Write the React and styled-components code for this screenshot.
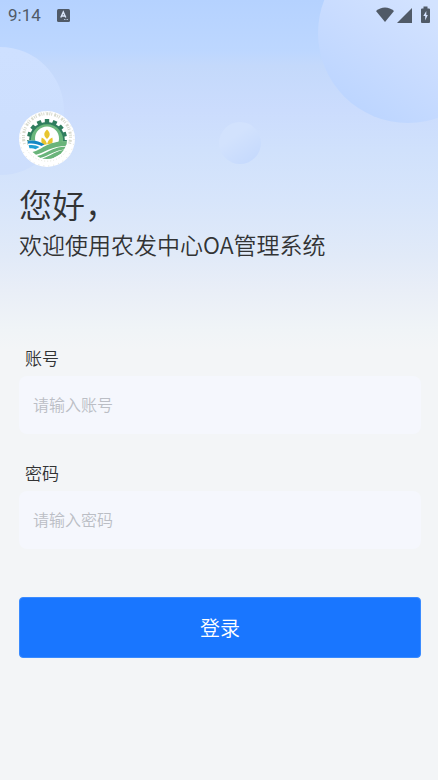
import React, { useState } from "react";
import styled, { createGlobalStyle } from "styled-components";

const GlobalStyle = createGlobalStyle`
  *,
  *::before,
  *::after {
    box-sizing: border-box;
  }

  body {
    margin: 0;
    background-color: #f3f5f7;
    color: #323334;
    font-family: Roboto, "Noto Sans CJK SC", sans-serif;
  }
`;

const Page = styled.div`
  position: relative;
  min-height: 100vh;
  overflow: hidden;
  background: linear-gradient(
      180deg,
      #b5d2ff 0,
      #bdd7ff 52px,
      #c4d9fb 66px,
      #cbdcfd 110px,
      #d0e1fc 150px,
      #d7e5fb 200px,
      #e1eaf8 256px,
      #e9eef7 290px,
      #f0f4f7 330px,
      #f3f5f7 350px
    )
    no-repeat;
`;

const Bubble = styled.span`
  position: absolute;
  width: ${({ $size }) => $size}px;
  height: ${({ $size }) => $size}px;
  border-radius: 50%;
  pointer-events: none;
`;

const LeftBubble = styled(Bubble)`
  top: 47px;
  left: -64px;
  background: linear-gradient(180deg, #cee0ff 0%, #cddffe 60%, #cddefc 100%);
`;

const RightBubble = styled(Bubble)`
  top: -57px;
  right: -60px;
  background: linear-gradient(215deg, #d3e3ff 35%, #c9dcff 60%, #bcd5ff 88%);
`;

const SmallBubble = styled(Bubble)`
  top: 122px;
  left: 50%;
  background: linear-gradient(145deg, #d2e2fd 35%, #c3d8fd 100%);
`;

const StatusBar = styled.header`
  position: relative;
  display: flex;
  align-items: center;
  justify-content: space-between;
  height: 30px;
  padding: 0 8px;
  color: #505a67;

  svg {
    display: block;
  }
`;

const StatusGroup = styled.div`
  display: flex;
  align-items: center;
  gap: ${({ $gap }) => $gap}px;
`;

const Time = styled.time`
  font-size: 17px;
  line-height: 20px;
`;

const Main = styled.main`
  position: relative;
  padding: 81px 17px 40px 19px;
  font-family: "Noto Sans CJK SC", sans-serif;
  font-weight: 350;
`;

const LogoMark = styled.svg`
  display: block;
  width: 56px;
  height: 56px;
`;

const Title = styled.h1`
  margin: 17px 0 4px;
  font-size: 33px;
  font-weight: inherit;
  line-height: 40px;
`;

const Subtitle = styled.p`
  margin: 0;
  font-size: 23px;
  line-height: 32px;
`;

const Form = styled.form`
  display: flex;
  flex-direction: column;
  gap: 27px;
  margin-top: 86px;
`;

const Field = styled.div`
  display: flex;
  flex-direction: column;
  gap: 6px;

  label {
    padding-left: 6px;
    font-size: 17px;
    line-height: 24px;
  }

  input {
    width: 100%;
    height: 58px;
    padding: 0 14px 2px;
    border: 0;
    border-radius: 8px;
    outline: none;
    background-color: #f5f7fd;
    color: inherit;
    font: inherit;
    font-size: 16px;
  }

  input::placeholder {
    color: #bbbec5;
    opacity: 1;
  }
`;

const SubmitButton = styled.button`
  height: 61px;
  margin-top: 21px;
  padding-bottom: 2px;
  border: 1px solid #3a8bff;
  border-radius: 4px;
  background-color: #1976ff;
  color: #fff;
  font: inherit;
  font-size: 20px;
  cursor: pointer;
`;

const teeth = [-100, -75, -50, -25, 0, 25, 50, 75, 100];

const Logo = () => (
  <LogoMark viewBox="0 0 56 56" role="img" aria-label="logo">
    <defs>
      <clipPath id="fields">
        <circle cx="28" cy="28" r="20" />
      </clipPath>
    </defs>
    <circle cx="28" cy="28" r="28" fill="#fff" />
    <circle cx="28" cy="28" r="27" fill="none" stroke="#e3e5dc" strokeWidth="1" strokeDasharray="1 4" />
    <path
      d="M5.500 33A23.500 23.500 0 1 1 50.500 33"
      fill="none"
      stroke="#d8dacd"
      strokeWidth="3"
      strokeDasharray="1 2 2 1 1 1"
    />
    <path d="M8 39A23.500 23.500 0 0 0 48 39" fill="none" stroke="#e2e5da" strokeWidth="1" strokeDasharray="1 2" />
    <g fill="#2f7d5e">
      {teeth.map((angle) => (
        <rect key={angle} x="25.800" y="8" width="4.400" height="5" transform={`rotate(${angle} 28 28)`} />
      ))}
    </g>
    <path d="M10.500 32a17.800 17.800 0 1 1 35 0" fill="#2f7d5e" />
    <path d="M12 32a16.200 16.200 0 1 1 32 0" fill="#6ab67c" />
    <circle cx="28" cy="27.500" r="12" fill="#fff" />
    <g fill="#e8c52e">
      <path d="M28 18.500c3.600 3.200 3.600 6.500 0 9.500-3.600-3-3.600-6.300 0-9.500z" />
      <path d="M28 35c-5.300-.4-6.400-3.500-5.300-8.400 3.800 1.800 5.300 4.500 5.300 8.400z" />
      <path d="M28 35c5.300-.4 6.400-3.500 5.300-8.400-3.800 1.800-5.300 4.500-5.300 8.400z" />
    </g>
    <g clipPath="url(#fields)">
      <path d="M8 30c7-1.500 12 .5 16 4l24-4v20H8z" fill="#fff" />
      <path d="M8.500 30.200c6-1.500 11 0 17 3.200l-3 1.600c-4-2-8.500-3-13.500-2.300z" fill="#1587c4" />
      <path d="M9.500 34.200c4-.7 8 0 11 1.700l-4 2.300c-2-.9-3.500-1-6-.8z" fill="#21a0d4" />
      <path d="M13.500 41c10-2 13-10.500 34.500-11v4.800c-16 .5-22 6.700-31 8.900z" fill="#69b47a" />
      <path d="M18 45c11-2.500 14-9 30-9.500v2.500c-13 1.200-17 6.500-27 9z" fill="#69b47a" />
      <path d="M23 47.500c9-2 13-7.900 25-8.900v3c-9 1.500-12 5.500-18 7.900z" fill="#69b47a" />
    </g>
  </LogoMark>
);

const LoginField = ({ id, label, ...rest }) => (
  <Field>
    <label htmlFor={id}>{label}</label>
    <input id={id} {...rest} />
  </Field>
);

const App = () => {
  const [account, setAccount] = useState("");
  const [password, setPassword] = useState("");

  return (
    <Page>
      <GlobalStyle />
      <LeftBubble $size={128} />
      <RightBubble $size={180} />
      <SmallBubble $size={42} />
      <StatusBar>
        <StatusGroup $gap={16}>
          <Time>9:14</Time>
          <svg width="13" height="13" viewBox="0 0 13 13">
            <rect width="13" height="13" rx="1.500" fill="currentColor" />
            <path d="M3.800 8.500L6.300 3l2.500 5.500M4.700 7h3.200" fill="none" stroke="#dce8fb" strokeWidth="1.400" />
            <path d="M7 10.500h1.500M9.500 10.500H11" stroke="#aebdd2" strokeWidth="1" />
          </svg>
        </StatusGroup>
        <StatusGroup $gap={3}>
          <svg width="18" height="16" viewBox="0 0 18 16">
            <path d="M0 4C5-.8 13-.8 18 4L9 15z" fill="currentColor" />
          </svg>
          <svg width="15" height="15" viewBox="0 0 15 15">
            <path d="M15 0v15H0z" fill="currentColor" />
          </svg>
          <svg width="15" height="18" viewBox="0 0 15 18">
            <path d="M7 2.500h1.500V.5h4v2H14q1 0 1 1V16q0 1-1 1H7q-1 0-1-1V3.500q0-1 1-1z" fill="currentColor" />
            <path d="M11.300 5L8.300 10h1.900v4.500L12.800 9h-1.500z" fill="#d6e4ff" />
          </svg>
        </StatusGroup>
      </StatusBar>
      <Main>
        <Logo />
        <Title>您好，</Title>
        <Subtitle>欢迎使用农发中心OA管理系统</Subtitle>
        <Form onSubmit={(e) => e.preventDefault()}>
          <LoginField
            id="account"
            label="账号"
            type="text"
            placeholder="请输入账号"
            value={account}
            onChange={(e) => setAccount(e.target.value)}
          />
          <LoginField
            id="password"
            label="密码"
            type="password"
            placeholder="请输入密码"
            value={password}
            onChange={(e) => setPassword(e.target.value)}
          />
          <SubmitButton type="submit">登录</SubmitButton>
        </Form>
      </Main>
    </Page>
  );
};

export default App;
